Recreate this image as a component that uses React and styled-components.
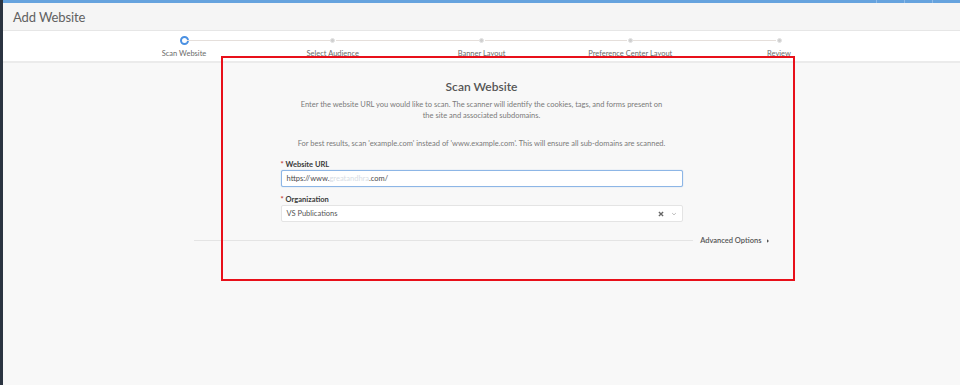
import styled, { createGlobalStyle } from "styled-components";

const GlobalStyle = createGlobalStyle`
  html, body {
    margin: 0;
    padding: 0;
    height: 100%;
    background: #f8f8f8;
    font-family: Lato, "Open Sans", "Liberation Sans", sans-serif;
  }
  #root { height: 100%; }
`;

const steps = ["Scan Website", "Select Audience", "Banner Layout", "Preference Center Layout", "Review"];

const App = () => {
  return (
    <>
      <GlobalStyle />
      <StyledPage>
        <SideStrip />
        <Main>
          <TopBar>
            <TopTab />
            <TopTab />
            <TopTab />
          </TopBar>
          <Header>Add Website</Header>
          <Stepper>
            <StepTrack>
              {steps.map((label, index) => (
                <StepGroup key={label} last={index === steps.length - 1}>
                  <Step>
                    <Dot active={index === 0} />
                    <StepLabel>{label}</StepLabel>
                  </Step>
                  {index < steps.length - 1 ? <Connector /> : null}
                </StepGroup>
              ))}
            </StepTrack>
          </Stepper>
          <Body>
            <Title>Scan Website</Title>
            <Description>
              Enter the website URL you would like to scan. The scanner will identify the cookies, tags, and forms present on
              <br />
              the site and associated subdomains.
            </Description>
            <Hint>
              For best results, scan 'example.com' instead of 'www.example.com'. This will ensure all sub-domains are scanned.
            </Hint>
            <Field first>
              <Label><Required>*</Required> Website URL</Label>
              <Input>
                https://www.<Blurred>greatandhra</Blurred>.com/
              </Input>
            </Field>
            <Field>
              <Label><Required>*</Required> Organization</Label>
              <Select>
                <span>VS Publications</span>
                <SelectIcons>
                  <ClearIcon viewBox="0 0 8 8">
                    <path d="M1.2 1.2 L6.8 6.8 M6.8 1.2 L1.2 6.8" />
                  </ClearIcon>
                  <ChevronIcon viewBox="0 0 8 8">
                    <path d="M1.5 2.8 L4 5.2 L6.5 2.8" />
                  </ChevronIcon>
                </SelectIcons>
              </Select>
            </Field>
            <AdvancedRow>
              <DividerLine />
              <AdvancedLink>
                Advanced Options
                <Caret viewBox="0 0 6 8">
                  <path d="M1.5 1.5 L4.5 4 L1.5 6.5 Z" />
                </Caret>
              </AdvancedLink>
            </AdvancedRow>
          </Body>
          <Highlight />
        </Main>
      </StyledPage>
    </>
  );
};

const StyledPage = styled.div`
  display: flex;
  height: 385px;
  overflow: hidden;
`;

const SideStrip = styled.div`
  width: 3px;
  flex-shrink: 0;
  background: #2b3441;
`;

const Main = styled.div`
  position: relative;
  flex: 1;
  display: flex;
  flex-direction: column;
  background: #f8f8f8;
`;

const TopBar = styled.div`
  height: 3px;
  background: #66a3de;
  display: flex;
  justify-content: flex-end;
`;

const TopTab = styled.div`
  width: 27px;
  border-left: 1px solid #8fbbe8;
`;

const Header = styled.div`
  height: 27px;
  display: flex;
  align-items: center;
  padding-left: 10px;
  background: #f5f5f5;
  border-bottom: 1px solid #e6e6e6;
  color: #616161;
  font-size: 13px;
  letter-spacing: -0.1px;
`;

const Stepper = styled.div`
  height: 32px;
  background: #ffffff;
  border-bottom: 2px solid #ebebeb;
  display: flex;
  justify-content: center;
  padding-top: 5px;
  box-sizing: border-box;
`;

const StepTrack = styled.div`
  width: 595px;
  display: flex;
  align-items: flex-start;
`;

const StepGroup = styled.div`
  display: flex;
  align-items: flex-start;
  flex: ${(props) => (props.last ? "0 0 0" : "1")};
`;

const Step = styled.div`
  width: 0;
  display: flex;
  flex-direction: column;
  align-items: center;
`;

const Dot = styled.div`
  box-sizing: border-box;
  width: ${(props) => (props.active ? "9px" : "5px")};
  height: ${(props) => (props.active ? "9px" : "5px")};
  margin-top: ${(props) => (props.active ? "0" : "2px")};
  margin-bottom: ${(props) => (props.active ? "4px" : "6px")};
  border-radius: 50%;
  flex-shrink: 0;
  background: ${(props) => (props.active ? "#ffffff" : "#cfcfcf")};
  border: ${(props) => (props.active ? "2.5px solid #4a90e2" : "1px solid #e2e2e2")};
`;

const StepLabel = styled.div`
  white-space: nowrap;
  font-size: 7.5px;
  line-height: 10px;
  color: #6b6b6b;
`;

const Connector = styled.div`
  flex: 1;
  height: 1px;
  margin: 4px 3px 0;
  background: #e5dfdb;
`;

const Body = styled.div`
  flex: 1;
  display: flex;
  flex-direction: column;
  align-items: center;
  padding-top: 16px;
`;

const Title = styled.div`
  font-size: 12px;
  line-height: 16px;
  color: #555555;
  font-weight: 600;
`;

const Description = styled.p`
  margin: 4px 0 0;
  font-size: 7.5px;
  line-height: 11px;
  color: #7a7a7a;
  text-align: center;
  white-space: nowrap;
`;

const Hint = styled(Description)`
  margin-top: 17px;
`;

const Field = styled.div`
  width: 402px;
  margin-top: ${(props) => (props.first ? "11px" : "8px")};
  display: flex;
  flex-direction: column;
`;

const Label = styled.div`
  font-size: 7.5px;
  line-height: 10px;
  font-weight: 700;
  color: #3a3a3a;
`;

const Required = styled.span`
  color: #c23934;
`;

const Input = styled.div`
  box-sizing: border-box;
  height: 17px;
  display: flex;
  align-items: center;
  padding-left: 5px;
  background: #ffffff;
  border: 1px solid #8db6e6;
  border-radius: 2px;
  box-shadow: 0 0 1px #8db6e6;
  font-size: 7.5px;
  color: #4a4a4a;
`;

const Blurred = styled.span`
  color: #d7dde5;
`;

const Select = styled.div`
  box-sizing: border-box;
  height: 17px;
  display: flex;
  align-items: center;
  justify-content: space-between;
  padding: 0 5px;
  background: #ffffff;
  border: 1px solid #e4e4e4;
  border-radius: 2px;
  font-size: 7.5px;
  color: #555555;
`;

const SelectIcons = styled.div`
  display: flex;
  align-items: center;
  gap: 7px;
`;

const ClearIcon = styled.svg`
  width: 6px;
  height: 6px;
  stroke: #666666;
  stroke-width: 1.8;
  fill: none;
`;

const ChevronIcon = styled.svg`
  width: 6px;
  height: 6px;
  stroke: #aaaaaa;
  stroke-width: 1;
  fill: none;
`;

const AdvancedRow = styled.div`
  width: 576px;
  margin-top: 14px;
  display: flex;
  align-items: center;
  gap: 7px;
`;

const DividerLine = styled.div`
  flex: 1;
  height: 1px;
  background: #e4e4e4;
`;

const AdvancedLink = styled.div`
  display: flex;
  align-items: center;
  gap: 4px;
  font-size: 7.5px;
  color: #555555;
  font-weight: 600;
  white-space: nowrap;
`;

const Caret = styled.svg`
  width: 4px;
  height: 6px;
  fill: #555555;
`;

const Highlight = styled.div`
  position: absolute;
  left: 218px;
  top: 56px;
  width: 574px;
  height: 225px;
  box-sizing: border-box;
  border: 2px solid #e8101a;
  pointer-events: none;
`;

export default App;
